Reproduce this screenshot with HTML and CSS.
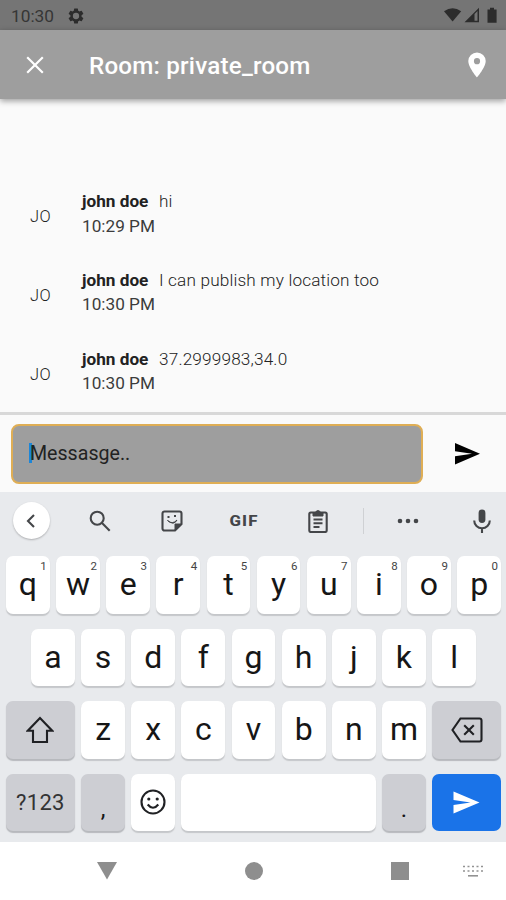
FILE: index.html
```html
<!DOCTYPE html>
<html lang="en">
<head>
<meta charset="utf-8">
<title>Room: private_room</title>
<link rel="stylesheet" href="styles.css">
</head>
<body>
<div class="phone">
  <header class="status">
    <span class="clock">10:30</span>
    <svg class="gear" width="18" height="18" viewBox="0 0 24 24"><path fill-rule="evenodd" d="M19.4 13a7.800 7.800 0 0 0 0-2l2.200-1.700a.6.6 0 0 0 .1-.6l-2-3.500a.5.500 0 0 0-.6-.2l-2.500 1a7.500 7.500 0 0 0-1.700-1L14.500 2.400a.5.500 0 0 0-.5-.4h-4a.5.500 0 0 0-.5.400L9.100 5a8 8 0 0 0-1.700 1l-2.500-1a.5.500 0 0 0-.6.200l-2 3.500a.5.500 0 0 0 .1.600L4.600 11a7.800 7.800 0 0 0 0 2l-2.200 1.700a.5.500 0 0 0-.1.600l2 3.500c.1.200.4.300.6.200l2.500-1a7.500 7.500 0 0 0 1.700 1l.4 2.600c0 .2.200.4.500.4h4c.300 0 .5-.2.500-.4l.4-2.600a8 8 0 0 0 1.700-1l2.500 1c.2.100.5 0 .6-.2l2-3.500a.5.500 0 0 0-.1-.6zM12 16.200a4.200 4.200 0 1 1 0-8.400 4.200 4.200 0 0 1 0 8.400z"/></svg>
    <svg class="signals" width="56" height="18" viewBox="0 0 56 18">
      <path d="M1 4.200Q9.600-1.800 18.200 4.200L9.600 14.500z"/>
      <path fill-rule="evenodd" d="M21.500 15.300L36 .8v14.500zM31.500 7v6.800h3V4z"/>
      <path d="M44.500 2.500H47V.8h4v1.700h2.600v13.200h-9.100z"/>
    </svg>
  </header>
  <div class="appbar">
    <svg class="close" width="18" height="18" viewBox="0 0 18 18"><path d="M1.200 1.200l15.600 15.600M16.800 1.200L1.200 16.800"/></svg>
    <h1>Room: private_room</h1>
    <svg class="pin" width="18" height="26" viewBox="0 0 18 26"><path fill-rule="evenodd" d="M9 .4A8.700 8.700 0 0 0 .3 9.100C.3 15.600 9 25.500 9 25.500s8.700-9.900 8.700-16.400A8.700 8.700 0 0 0 9 .4zm0 11.900a3.100 3.100 0 1 1 0-6.200 3.100 3.100 0 0 1 0 6.200z"/></svg>
  </div>
  <main class="messages">
    <article class="msg"><span class="avatar">JO</span><div><p><b>john doe</b><span>hi</span></p><p class="time">10:29 PM</p></div></article>
    <article class="msg"><span class="avatar">JO</span><div><p><b>john doe</b><span>I can publish my location too</span></p><p class="time">10:30 PM</p></div></article>
    <article class="msg"><span class="avatar">JO</span><div><p><b>john doe</b><span>37.2999983,34.0</span></p><p class="time">10:30 PM</p></div></article>
  </main>
  <div class="composer">
    <div class="field"><i class="caret"></i><span>Messasge..</span></div>
    <svg class="send" width="26" height="22" viewBox="0 0 26 22"><path d="M0 0l25 10.800L0 21.600v-8.300l17-2.500L0 8.300z"/></svg>
  </div>
  <section class="keyboard">
    <div class="tools">
      <div class="cell back"><span class="round"><svg width="10" height="16" viewBox="0 0 10 16"><path d="M8 2L2 8l6 6"/></svg></span></div>
      <div class="cell search"><svg width="22" height="22" viewBox="0 0 22 22"><circle cx="8.200" cy="8.200" r="6.500"/><path d="M13 13l7.700 7.700"/></svg></div>
      <div class="cell sticker"><svg width="22" height="22" viewBox="0 0 22 22"><path d="M3.500 1.500h15a2 2 0 0 1 2 2V14l-6.500 6.500H3.500a2 2 0 0 1-2-2v-15a2 2 0 0 1 2-2z"/><path d="M14 20.500V14h6.500zM6.500 10.500q5 4.500 9.500-.5-3 6-9.500.5z" class="solid"/><path d="M6.500 7h2M13 6h2"/></svg></div>
      <div class="cell gif"><span>GIF</span></div>
      <div class="cell clip"><svg width="20" height="24" viewBox="0 0 20 24"><path d="M2.800 3.500h14.400a1.500 1.500 0 0 1 1.500 1.500v16.500a1.500 1.500 0 0 1-1.500 1.500H2.800a1.500 1.500 0 0 1-1.500-1.500V5a1.500 1.500 0 0 1 1.500-1.500zM5.500 10.500h9M5.500 14.200h9M5.500 18h6"/><path class="solid" d="M5 3.500h2.500a2.600 2.600 0 0 1 5 0H15V7H5z"/></svg></div>
      <i class="rule"></i>
      <div class="cell dots"><svg width="22" height="6" viewBox="0 0 22 6"><circle cx="3" cy="3" r="2.300"/><circle cx="11" cy="3" r="2.300"/><circle cx="19" cy="3" r="2.300"/></svg></div>
      <div class="cell mic"><svg width="18" height="24" viewBox="0 0 18 24"><rect x="5.600" y=".5" width="6.800" height="13.500" rx="3.400"/><path d="M1.200 11.500a7.800 7.800 0 0 0 15.600 0M9 19.300V24"/></svg></div>
    </div>
    <div class="row">
      <div class="key">q<sup>1</sup></div><div class="key">w<sup>2</sup></div><div class="key">e<sup>3</sup></div><div class="key">r<sup>4</sup></div><div class="key">t<sup>5</sup></div><div class="key">y<sup>6</sup></div><div class="key">u<sup>7</sup></div><div class="key">i<sup>8</sup></div><div class="key">o<sup>9</sup></div><div class="key">p<sup>0</sup></div>
    </div>
    <div class="row">
      <div class="key">a</div><div class="key">s</div><div class="key">d</div><div class="key">f</div><div class="key">g</div><div class="key">h</div><div class="key">j</div><div class="key">k</div><div class="key">l</div>
    </div>
    <div class="row">
      <div class="key wide grey"><svg width="28" height="28" viewBox="0 0 28 28"><path d="M14 2L1.800 14.700H7V26h14V14.700h5.200z"/></svg></div>
      <div class="key">z</div><div class="key">x</div><div class="key">c</div><div class="key">v</div><div class="key">b</div><div class="key">n</div><div class="key">m</div>
      <div class="key wide grey"><svg width="32" height="26" viewBox="0 0 32 26"><path d="M9.500 1.500h19a2 2 0 0 1 2 2v19a2 2 0 0 1-2 2h-19L1.500 13zM13.200 8.200l9.600 9.600M22.800 8.200l-9.600 9.600"/></svg></div>
    </div>
    <div class="row">
      <div class="key wide grey num">?123</div>
      <div class="key grey punct">,</div>
      <div class="key"><svg class="smile" width="26" height="26" viewBox="0 0 26 26"><circle cx="13" cy="13" r="11.500"/><path d="M7.700 15.500q5.300 6.500 10.600 0"/><circle class="eye" cx="8.800" cy="10" r="1.600"/><circle class="eye" cx="17.200" cy="10" r="1.600"/></svg></div>
      <div class="key space"></div>
      <div class="key grey punct">.</div>
      <div class="key wide blue"><svg width="27" height="23" viewBox="0 0 27 23"><path d="M.5.500L26.500 11.500.5 22.500V14l17-2.500L.5 9z"/></svg></div>
    </div>
  </section>
  <nav class="nav">
    <svg class="down" width="22" height="18" viewBox="0 0 22 18"><path d="M1 0h20L11 17.500z"/></svg>
    <i class="home"></i>
    <i class="recent"></i>
    <svg class="kb" width="20" height="13" viewBox="0 0 20 13"><path d="M0 1.500h20M0 6h20" stroke-dasharray="2 2.500"/><path d="M5 10.800h10"/></svg>
  </nav>
</div>
</body>
</html>
```
FILE: styles.css
```css
* { box-sizing: border-box; }
body { margin: 0; background: #fafafa; font-family: Roboto, "Liberation Sans", sans-serif; }
p, h1 { margin: 0; }
svg, i { display: block; flex: none; }
.phone { width: 506px; height: 900px; display: flex; flex-direction: column; overflow: hidden; }

.status { height: 30px; flex: none; background: #757575; display: flex; align-items: center; padding: 1px 7px 0 11px; color: #363636; }
.status svg { fill: #2c2c2c; }
.clock { width: 45px; font-size: 17.300px; line-height: 30px; margin-right: 11px; }
.signals { margin-left: auto; }

.appbar { height: 69px; flex: none; background: #9e9e9e; display: flex; align-items: center; padding: 0 20px 0 26px; box-shadow: 0 2px 6px rgba(0,0,0,.38); position: relative; }
.appbar h1 { font-size: 24.200px; font-weight: 500; color: #fff; margin-left: 45px; line-height: 30px; padding-top: 2px; letter-spacing: .2px; white-space: nowrap; }
.close { stroke: #fff; stroke-width: 2.200; fill: none; }
.pin { fill: #fff; margin-left: auto; }

.messages { height: 313px; flex: none; padding-top: 90px; color: #444; font-size: 17.200px; }
.msg { display: flex; height: 78.800px; line-height: 24.500px; }
.avatar { width: 82px; padding-left: 30px; line-height: 56px; font-size: 16.500px; font-weight: 300; letter-spacing: .4px; color: #222; }
.msg p { display: flex; white-space: nowrap; font-weight: 300; color: #222; letter-spacing: .16px; }
.msg b { width: 77px; font-weight: 700; letter-spacing: 0; }
.msg .time { font-weight: 400; color: #3c3c3c; letter-spacing: 0; }

.composer { height: 80px; flex: none; border-top: 3px solid #d8d8d8; display: flex; padding: 9px 0 0 11px; }
.field { width: 412px; height: 60px; border: 2px solid #dfae55; border-radius: 8px; background: #9e9e9e; display: flex; padding: 16px 0 0 16px; font-size: 19.600px; line-height: 24px; color: #222; }
.caret { width: 3px; height: 20px; background: #1c86d8; margin: 1px -2px 0 0; }
.send { margin: 19px 0 0 32px; }

.keyboard { height: 350px; flex: none; background: #e8eaed; display: flex; flex-direction: column; gap: 14.500px; }
.tools { height: 49.500px; flex: none; padding-top: 8px; display: flex; align-items: center; }
.tools svg { fill: none; stroke: #444649; stroke-width: 2.100; }
.tools .solid, .tools .dots circle, .tools .mic rect { fill: #444649; }
.tools .dots circle, .tools .mic rect { stroke: none; }
.tools svg .solid { stroke-width: 1; }
.cell { flex: none; width: 73px; display: flex; justify-content: center; align-items: center; }
.cell.back { width: 62px; }
.cell.search { width: 75px; }
.cell.sticker { width: 70px; }
.cell.gif { width: 74px; }
.cell.dots { width: 108px; }
.cell.mic { width: 40px; }
.rule { width: 1px; height: 26px; margin-left: 9px; margin-right: -10px; background: #cfd1d4; }
.round { width: 37px; height: 37px; border-radius: 50%; background: #fff; display: flex; align-items: center; justify-content: center; box-shadow: 0 1px 2px rgba(0,0,0,.25); }
.gif span { font-size: 15px; line-height: 20px; font-weight: 800; color: #444649; letter-spacing: 1px; transform: scaleX(1.120); }

.row { display: flex; justify-content: center; gap: 6.400px; padding-left: 1px; height: 58px; flex: none; }
.key { position: relative; width: 43.750px; height: 57.500px; flex: none; border-radius: 7px; background: #fff; box-shadow: 0 1.500px 1px #c5c7ca; display: flex; align-items: center; justify-content: center; font-size: 32px; line-height: 56px; color: #161616; padding-bottom: 1px; }
.key sup { position: absolute; right: 3px; top: 4px; font-size: 11.500px; line-height: 13px; color: #444; }
.key svg { fill: none; stroke: #202124; stroke-width: 2.100; position: relative; top: .5px; }
.key .eye { fill: #202124; stroke: none; }
.wide { width: 68.800px; }
.grey { background: #cdced3; box-shadow: 0 1.500px 1px #b7b9bd; }
.num { font-size: 22px; letter-spacing: .3px; padding: 2px 0 0; color: #333; }
.punct { font-size: 24px; padding: 14px 0 0; }
.space { width: 194.200px; }
.blue { background: #1a73e8; box-shadow: none; }
.key.blue svg { fill: #fff; stroke: none; }

.nav { height: 58px; flex: none; background: #fff; display: flex; align-items: center; padding-left: 96px; }
.down { fill: #8e8e8e; }
.home { width: 18px; height: 18px; border-radius: 50%; background: #8e8e8e; margin-left: 127px; }
.recent { width: 18px; height: 18px; background: #8e8e8e; margin-left: 127.500px; }
.kb { margin-left: 54px; fill: none; stroke: #929292; stroke-width: 1.600; }
```
